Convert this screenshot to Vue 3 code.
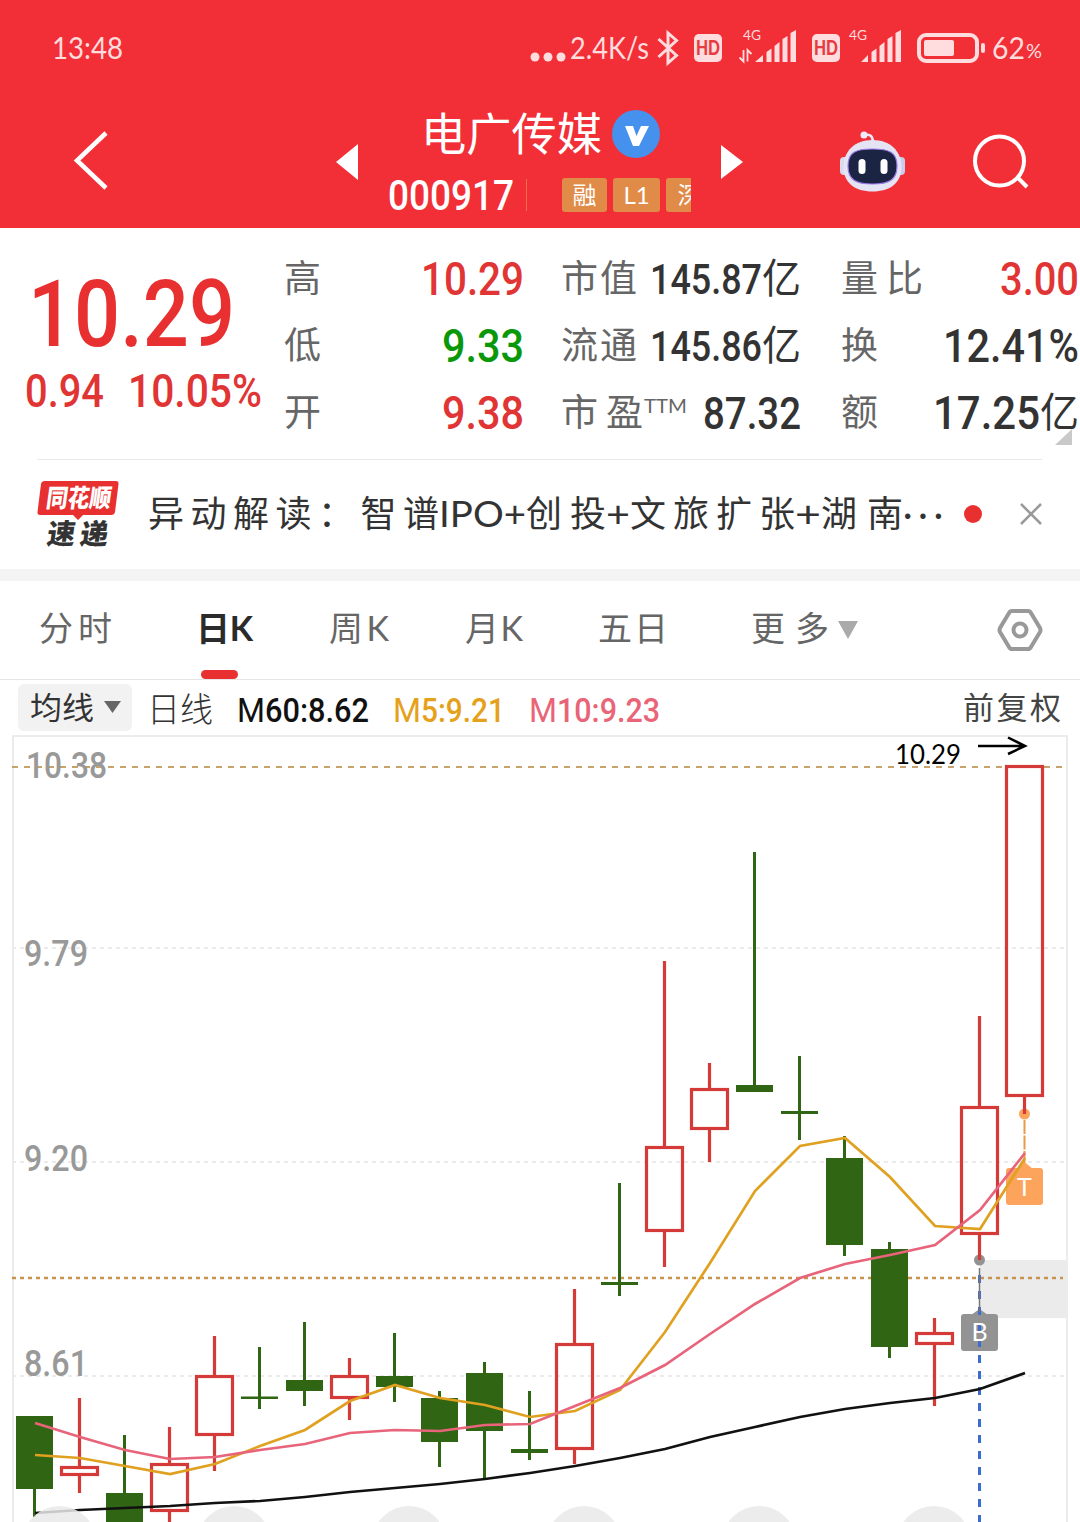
<template>
    <div class="page">
        <header class="header">
            <div class="status">
                <Fit class="clock" t="13:48" :w="71" :s="31" />
                <div class="status-right">
                    <svg class="dots" width="36" height="10" viewBox="0 0 36 10">
                        <circle cx="5" cy="5" r="4.5" />
                        <circle cx="18" cy="5" r="4.5" />
                        <circle cx="31" cy="5" r="4.5" />
                    </svg>
                    <Fit class="speed" t="2.4K/s" :w="79" :s="30" />
                    <svg class="bluetooth" width="22" height="36" viewBox="0 0 22 36">
                        <path d="M1.500 9 L19.500 25.500 L11 33 V3 L19.500 10.500 L1.500 27" />
                    </svg>
                    <span class="hd"><Fit t="HD" :w="24" :s="20" /></span>
                    <svg class="signal" width="57" height="36" viewBox="0 0 57 36">
                        <text x="4" y="12" textLength="18" lengthAdjust="spacingAndGlyphs">4G</text>
                        <path d="M4.500 22V33.500L0.500 29.500M8.500 33.500V22L12.500 26" fill="none" stroke="currentColor" stroke-width="1.800" />
                        <path d="M16 34L24 27V34zM27.500 24L32.500 20.500V34H27.500zM35.500 18L40.500 14V34H35.500zM43.500 11L48.500 8V34H43.500zM51.500 5L57 2V34H51.500z" />
                    </svg>
                    <span class="hd hd-second"><Fit t="HD" :w="24" :s="20" /></span>
                    <svg class="signal signal-second" width="52" height="36" viewBox="5 0 52 36">
                        <text x="5" y="12" textLength="18" lengthAdjust="spacingAndGlyphs">4G</text>
                        <path d="M17 34L24 27V34zM27.500 24L32.500 20.500V34H27.500zM35.500 18L40.500 14V34H35.500zM43.500 11L48.500 8V34H43.500zM51.500 5L57 2V34H51.500z" />
                    </svg>
                    <svg class="battery" width="68" height="30" viewBox="0 0 68 30">
                        <rect x="2" y="2" width="58" height="26" rx="7" fill="none" stroke="currentColor" stroke-width="4" />
                        <rect x="7" y="7" width="30" height="16" rx="2" />
                        <rect x="64" y="10" width="4" height="10" rx="2" />
                    </svg>
                    <Fit class="level" t="62" :w="33" :s="31" />
                    <Fit class="percent" t="%" :w="16" :s="19" />
                </div>
            </div>
            <div class="nav">
                <svg class="back" width="36" height="60" viewBox="0 0 36 60">
                    <path d="M33 3L4 30.500L33 58" />
                </svg>
                <svg class="prev" width="22" height="36" viewBox="0 0 22 36"><path d="M22 0V36L0 18z" /></svg>
                <div class="stock">
                    <div class="stock-name">
                        <Fit t="电广传媒" :w="181" :s="45" />
                        <svg width="48" height="48" viewBox="0 0 48 48">
                            <circle cx="24" cy="24" r="24" fill="#4690ee" />
                            <path d="M13 16H21L24.500 26L29 16H37L27 36H21z" fill="#fff" />
                        </svg>
                    </div>
                    <div class="stock-code">
                        <Fit class="code" t="000917" :w="126" :s="42" />
                        <i class="split"></i>
                        <div class="tags">
                            <span class="tag rong">融</span>
                            <span class="tag level-one">L1</span>
                            <span class="tag">深</span>
                        </div>
                    </div>
                </div>
                <svg class="next" width="22" height="34" viewBox="0 0 22 34"><path d="M0 0V34L22 17z" /></svg>
                <svg class="robot" width="66" height="62" viewBox="0 0 66 62">
                    <path d="M25 4Q33 2 33 12" fill="none" stroke="#e9e6f6" stroke-width="2.500" />
                    <circle cx="24" cy="4" r="3.500" fill="#efeafa" />
                    <rect x="0" y="26" width="10" height="18" rx="4" fill="#d9daf0" />
                    <rect x="55" y="26" width="10" height="18" rx="4" fill="#c9cdec" />
                    <path d="M32.500 9C50 9 61.500 20 61.500 36C61.500 52 50 60.500 32.500 60.500C15 60.500 3.500 52 3.500 36C3.500 20 15 9 32.500 9z" fill="#e4e4f5" />
                    <path d="M32.500 18C49 18 57 21 57 35C57 49 49 53 32.500 53C16 53 8 49 8 35C8 21 16 18 32.500 18z" fill="#1c2444" stroke="#9a7bea" stroke-width="1.200" />
                    <rect x="18.500" y="28" width="7" height="15" rx="3.500" fill="#fff" />
                    <rect x="40.500" y="28" width="7" height="15" rx="3.500" fill="#fff" />
                </svg>
                <svg class="search" width="56" height="56" viewBox="0 0 56 56">
                    <circle cx="26.500" cy="27" r="24.500" />
                    <path d="M44 43L54 53" />
                </svg>
            </div>
        </header>

        <section class="quote">
            <div class="price up">
                <Fit class="num price-now" t="10.29" :w="207" :s="92" />
                <div class="price-change">
                    <Fit class="num" t="0.94" :w="79" :s="46" />
                    <Fit class="num" t="10.05%" :w="134" :s="46" />
                </div>
            </div>
            <div v-for="(col, i) in quotes" :key="i" class="col" :class="'col-' + i">
                <div v-for="row in col" :key="row.label" class="cell">
                    <span class="label">
                        <Fit :t="row.label" :w="row.lw" :s="37" spacing />
                        <Fit v-if="row.sup" class="sup" :t="row.sup" :w="43" :s="19" />
                    </span>
                    <span class="value" :class="row.tone">
                        <Fit class="num" :t="row.value" :w="row.w" :s="row.s || 46" />
                        <Fit v-if="row.unit" class="unit" :t="row.unit" :w="39" :s="41" />
                    </span>
                </div>
            </div>
            <i class="corner"></i>
        </section>

        <section class="news">
            <svg class="logo" width="82" height="68" viewBox="0 0 82 68">
                <path d="M8 1H79Q82 1 81.500 4L78 32Q77.500 35 74 35H46L41 40L36 35H3Q0 35 0.500 32L4 4Q4.500 1 8 1z" fill="#e93030" />
                <g transform="skewX(-8)">
                    <text x="12" y="27" textLength="65" lengthAdjust="spacingAndGlyphs" font-size="25" fill="#fff">同花顺</text>
                    <text x="18" y="64" textLength="61" font-size="28" fill="#333">速递</text>
                </g>
            </svg>
            <div class="headline">
                <Fit v-for="(part, i) in headline" :key="i" :t="part.t" :w="part.w" :s="36" :spacing="part.spacing" />
            </div>
            <i class="unread"></i>
            <svg class="close" width="22" height="22" viewBox="0 0 22 22"><path d="M1 1L21 21M21 1L1 21" /></svg>
        </section>

        <nav class="tabs">
            <span
                v-for="(tab, i) in tabs"
                :key="tab.t"
                class="tab"
                :class="{ active: i === current }"
                @click="current = i"
            >
                <Fit :t="tab.t" :w="tab.w" :s="34" spacing />
            </span>
            <svg class="more" width="22" height="18" viewBox="0 0 22 18"><path d="M1 0H21L11 18z" /></svg>
            <svg class="settings" width="44" height="44" viewBox="0 0 44 44">
                <path d="M14 3H30Q32 3 33 5L42 20Q43 22 42 24L33 39Q32 41 30 41H14Q12 41 11 39L2 24Q1 22 2 20L11 5Q12 3 14 3z" />
                <circle cx="22" cy="22" r="6.500" />
            </svg>
        </nav>

        <div class="legend">
            <span class="ma-button">
                <Fit t="均线" :w="64" :s="31" />
                <svg width="17" height="12" viewBox="0 0 17 12"><path d="M0 0H17L8.500 12z" fill="#666" /></svg>
            </span>
            <Fit class="period" t="日线" :w="66" :s="34" />
            <span v-for="m in averages" :key="m.t" class="average" :class="m.name">
                <Fit class="letter" t="M" :w="28" :s="34" />
                <Fit class="num" :t="m.t" :w="m.w" :s="34" />
            </span>
            <Fit class="adjust" t="前复权" :w="98" :s="31" spacing />
        </div>

        <svg class="chart" width="1080" height="788" viewBox="0 734 1080 788">
            <rect x="980" y="1260" width="87" height="58" fill="#ebebeb" />
            <path d="M13 1522V736H1067V1522" fill="none" stroke="#ececec" stroke-width="2" />
            <path d="M12 948H1066M12 1162H1066M12 1376H1066" stroke="#ebebeb" stroke-width="2" stroke-dasharray="4 4" />
            <path d="M12 767H1062" stroke="#c8a26c" stroke-width="2" stroke-dasharray="6 6" />
            <path d="M12 1278H1063" stroke="#c6944e" stroke-width="2.500" stroke-dasharray="4 4" />

            <g class="axis">
                <text x="26" y="778" textLength="81" lengthAdjust="spacingAndGlyphs">10.38</text>
                <text x="24" y="966" textLength="64" lengthAdjust="spacingAndGlyphs">9.79</text>
                <text x="24" y="1171" textLength="64" lengthAdjust="spacingAndGlyphs">9.20</text>
                <text x="24" y="1376" textLength="64" lengthAdjust="spacingAndGlyphs">8.61</text>
            </g>

            <!-- trade marks -->
            <circle cx="979.500" cy="1260" r="5.500" fill="#939393" />
            <path d="M971 1315L979.500 1309L988 1315z" fill="#939393" />
            <rect x="961" y="1314" width="37" height="37" rx="3" fill="#939393" />
            <circle cx="1024.500" cy="1114" r="5.500" fill="#fca45c" />
            <path d="M1024.500 1120V1165" stroke="#e8994a" stroke-width="2" stroke-dasharray="14 1.500" />
            <path d="M1016 1169L1024.500 1162L1033 1169z" fill="#fca45c" />
            <rect x="1006" y="1168" width="37" height="37" rx="3" fill="#fca45c" />
            <path d="M979.500 1275V1522" stroke="#3e6bd2" stroke-width="3" stroke-dasharray="8 8" />
            <path d="M979.500 1268V1312" stroke="#777" stroke-width="1.500" />
            <text class="mark" x="979.500" y="1341">B</text>
            <text class="mark" x="1024.500" y="1196">T</text>

            <template v-for="(c, i) in candles" :key="i">
                <g v-if="c[0]" stroke="#d43a38" stroke-width="3.200">
                    <path :d="`M${cx(i)} ${c[1]}V${c[3]}M${cx(i)} ${c[4]}V${c[2]}`" />
                    <rect :x="cx(i) - 18" :y="c[3] + 1.5" width="36" :height="c[4] - c[3] - 3" fill="none" />
                </g>
                <g v-else fill="#306514">
                    <rect :x="cx(i) - 1.500" :y="c[1]" width="3" :height="c[2] - c[1]" />
                    <rect :x="cx(i) - 18.5" :y="c[3]" width="37" :height="c[4] - c[3]" />
                </g>
            </template>

            <polyline :points="line(ma60)" class="ma" stroke="#111" />
            <polyline :points="line(ma5)" class="ma" stroke="#e0a020" />
            <polyline :points="line(ma10)" class="ma" stroke="#e8647a" />

            <text class="last" x="895" y="764" textLength="66" lengthAdjust="spacingAndGlyphs">10.29</text>
            <path d="M978 746H1024M1008 737.500L1025 746L1008 754" fill="none" stroke="#000" stroke-width="2.500" />

            <circle v-for="x in [59.5, 234, 409, 584, 759, 934]" :key="x" :cx="x" cy="1543" r="37" fill="#e9e9e9" fill-opacity="0.850" />
        </svg>
    </div>
</template>

<script setup>
import { h, ref } from 'vue'

// One line of text squeezed or spaced to an exact width, centred on its box
const Fit = ({ t, w, s, spacing }) =>
    h('svg', { width: w, height: s, style: { flex: 'none', display: 'block', overflow: 'visible' } }, [
        h('text', {
            x: 0,
            y: s * (/[\u4e00-\u9fff]/.test(t) ? 0.86 : 0.856),
            'font-size': s,
            fill: 'currentColor',
            textLength: w,
            lengthAdjust: spacing ? 'spacing' : 'spacingAndGlyphs'
        }, t)
    ])
Fit.props = { t: String, w: Number, s: Number, spacing: Boolean }

const current = ref(1)

const quotes = [
    [
        { label: '高', lw: 37, value: '10.29', w: 103, tone: 'up' },
        { label: '低', lw: 37, value: '9.33', w: 82, tone: 'down' },
        { label: '开', lw: 37, value: '9.38', w: 82, tone: 'up' }
    ],
    [
        { label: '市值', lw: 76, value: '145.87', w: 112, s: 42, unit: '亿' },
        { label: '流通', lw: 76, value: '145.86', w: 112, s: 42, unit: '亿' },
        { label: '市盈', lw: 82, sup: 'TTM', value: '87.32', w: 98, s: 44 }
    ],
    [
        { label: '量比', lw: 82, value: '3.00', w: 79, tone: 'up' },
        { label: '换', lw: 37, value: '12.41%', w: 136 },
        { label: '额', lw: 37, value: '17.25', w: 107, unit: '亿' }
    ]
]

const headline = [
    { t: '异动解读：智谱', w: 291, spacing: true },
    { t: 'IPO+', w: 87 },
    { t: '创投', w: 80, spacing: true },
    { t: '+', w: 24 },
    { t: '文旅扩张', w: 165, spacing: true },
    { t: '+', w: 26 },
    { t: '湖南', w: 82, spacing: true },
    { t: '···', w: 40, spacing: true }
]

const tabs = [
    { t: '分时', w: 73 },
    { t: '日K', w: 57 },
    { t: '周K', w: 60 },
    { t: '月K', w: 58 },
    { t: '五日', w: 70 },
    { t: '更多', w: 78 }
]

const averages = [
    { name: 'm60', t: '60:8.62', w: 104 },
    { name: 'm5', t: '5:9.21', w: 84 },
    { name: 'm10', t: '10:9.23', w: 103 }
]

// [rising, high, low, body top, body bottom]
const candles = [
    [0, 1416, 1517, 1416, 1489],
    [1, 1398, 1493, 1466, 1476],
    [0, 1435, 1530, 1493, 1530],
    [1, 1427, 1530, 1463, 1512],
    [1, 1336, 1471, 1375, 1436],
    [0, 1347, 1409, 1396.5, 1399],
    [0, 1322, 1406, 1380, 1391],
    [1, 1358, 1420, 1375, 1399],
    [0, 1333, 1402, 1376, 1387],
    [0, 1391, 1467, 1398, 1442],
    [0, 1362, 1479, 1373, 1431],
    [0, 1391, 1460, 1449, 1453],
    [1, 1289, 1464, 1343, 1450],
    [0, 1183, 1296, 1282, 1285],
    [1, 961, 1267, 1146, 1232],
    [1, 1063, 1162, 1088, 1130],
    [0, 852, 1092, 1085, 1092],
    [0, 1056, 1140, 1111, 1114],
    [0, 1136, 1256, 1158, 1245],
    [0, 1242, 1358, 1249, 1347],
    [1, 1318, 1406, 1332, 1345],
    [1, 1016, 1260, 1106, 1235],
    [1, 765, 1114, 765, 1097]
]

const ma5 = [1455, 1458, 1466, 1474, 1464, 1446, 1430, 1401, 1385, 1398, 1405, 1417, 1411, 1390, 1332, 1263, 1191, 1146, 1138, 1177, 1226, 1229, 1158]
const ma10 = [1423, 1437, 1450, 1459, 1457, 1450, 1444, 1433, 1430, 1431, 1425, 1424, 1406, 1388, 1365, 1334, 1304, 1278, 1264, 1255, 1245, 1210, 1153]
const ma60 = [1513, 1510, 1508, 1506, 1503, 1501, 1497, 1492, 1488, 1484, 1479, 1473, 1466, 1458, 1449, 1437, 1427, 1417, 1409, 1403, 1398, 1389, 1373]

const cx = (i) => 34.5 + i * 45
const line = (values) => values.map((y, i) => `${cx(i) + 0.5},${y}`).join(' ')
</script>

<style scoped>
.page {
    width: 1080px;
    height: 1522px;
    overflow: hidden;
    background: #fff;
    color: #333;
    font-family: Lato, "Noto Sans CJK SC", sans-serif;
}

.page svg {
    flex: none;
    display: block;
    overflow: visible;
}

.page .chart {
    overflow: hidden;
}

.num {
    font-family: Roboto, "Noto Sans CJK SC", sans-serif;
    font-weight: 500;
}

.header {
    height: 228px;
    background: #f22f37;
    color: #fff;
}

.status {
    height: 96px;
    box-sizing: border-box;
    padding: 0 38px 0 52px;
    display: flex;
    align-items: center;
    justify-content: space-between;
    color: #ffdcdd;
    fill: currentColor;
}

.clock {
    margin-bottom: 1px;
}

.status-right {
    display: flex;
    align-items: center;
}

.dots {
    margin: 18px 4px 0 0;
}

.bluetooth {
    margin: 0 15px 0 8px;
    fill: none;
    stroke: currentColor;
    stroke-width: 3;
}

.hd {
    width: 28px;
    height: 28px;
    border-radius: 5px;
    background: #ffdcdd;
    color: #e63b41;
    font-weight: 900;
    display: flex;
    align-items: center;
    justify-content: center;
}

.signal {
    margin: -4px 16px 0 17px;
    font-size: 14px;
}

.signal-second {
    margin-left: 9px;
}

.level {
    margin: -2px 1px 0 7px;
}

.percent {
    margin-top: 7px;
}

.nav {
    height: 132px;
    display: flex;
    align-items: center;
}

.back {
    margin: -4px 0 0 73px;
    fill: none;
    stroke: #fff;
    stroke-width: 4.500;
}

.prev {
    margin-left: 227px;
    fill: #fff;
}

.stock {
    width: 303px;
    margin-left: 30px;
    padding-top: 2px;
}

.stock-name {
    display: flex;
    align-items: center;
    gap: 10px;
    padding-left: 33px;
}

.stock-code {
    display: flex;
    align-items: center;
    margin-top: 16px;
    height: 42px;
}

.code {
    font-family: Roboto, sans-serif;
    font-weight: 500;
}

.split {
    width: 1px;
    height: 32px;
    margin: 0 35px 0 12px;
    background: #f46a4a;
}

.tags {
    display: flex;
    gap: 6px;
    width: 129px;
    overflow: hidden;
}

.tag {
    flex: none;
    width: 47px;
    height: 34px;
    border-radius: 3px;
    background: #e08c48;
    font-size: 24px;
    line-height: 34px;
    text-align: center;
}

.rong {
    width: 45px;
}

.next {
    margin-left: 30px;
    fill: #fff;
}

.robot {
    margin-left: 97px;
}

.search {
    margin-left: 67px;
    fill: none;
    stroke: #fff;
    stroke-width: 4;
}

.quote {
    position: relative;
    height: 231px;
    display: flex;
}

.quote::after {
    content: "";
    position: absolute;
    left: 37px;
    right: 38px;
    bottom: -1px;
    height: 1px;
    background: #e9e9e9;
}

.up {
    color: #e03534;
}

.down {
    color: #0a980a;
}

.price {
    width: 284px;
    padding-top: 39px;
    box-sizing: border-box;
}

.price-now {
    margin-left: 28px;
    color: #e93030;
}

.price-change {
    display: flex;
    gap: 24px;
    padding: 9px 0 0 25px;
}

.col {
    display: grid;
    grid-template-rows: repeat(3, 67px);
    padding-top: 17px;
}

.col-0 {
    width: 240px;
}

.col-1 {
    width: 240px;
    margin-left: 37px;
}

.col-2 {
    width: 238px;
    margin-left: 40px;
}

.cell,
.label,
.value {
    display: flex;
    align-items: center;
}

.cell {
    justify-content: space-between;
}

.label {
    color: #666;
}

.sup {
    margin: -12px 0 0 1px;
}

.corner {
    position: absolute;
    right: 8px;
    bottom: 14px;
    width: 17px;
    height: 16px;
    background: #c9c9c9;
    clip-path: polygon(100% 0, 100% 100%, 0 100%);
}

.news {
    height: 110px;
    box-sizing: border-box;
    padding-left: 37px;
    display: flex;
    align-items: center;
}

.logo {
    font-weight: 900;
}

.headline {
    display: flex;
    margin-left: 29px;
    width: 796px;
}

.unread {
    width: 18px;
    height: 18px;
    margin-left: 20px;
    border-radius: 50%;
    background: #e93030;
}

.close {
    margin-left: 38px;
    stroke: #999;
    stroke-width: 2.500;
}

.tabs {
    height: 111px;
    box-sizing: border-box;
    border-top: 12px solid #f4f4f4;
    border-bottom: 1px solid #e6e6e6;
    display: flex;
    align-items: center;
    color: #666;
}

.tab {
    position: relative;
    height: 98px;
    box-sizing: border-box;
    padding-bottom: 2px;
    margin-left: 77px;
    display: flex;
    align-items: center;
}

.tab:first-child {
    margin-left: 39px;
}

.tab:nth-child(2) {
    margin-left: 84px;
}

.tab:nth-child(3),
.tab:nth-child(4) {
    margin-left: 76px;
}

.tab:nth-child(5) {
    margin-left: 75px;
}

.tab:nth-child(6) {
    margin-left: 83px;
}

.active {
    color: #2b2b2b;
    font-weight: bold;
}

.active::after {
    content: "";
    position: absolute;
    left: 5px;
    bottom: 0;
    width: 37px;
    height: 9px;
    border-radius: 5px;
    background: #e93030;
}

.more {
    margin-left: 8px;
    fill: #aaa;
}

.settings {
    margin-left: 139px;
    fill: none;
    stroke: #999;
    stroke-width: 4;
}

.legend {
    height: 54px;
    padding: 0 19px 0 18px;
    display: flex;
    align-items: center;
}

.ma-button {
    width: 114px;
    height: 47px;
    box-sizing: border-box;
    padding-left: 12px;
    border-radius: 6px;
    background: #f2f2f2;
    display: flex;
    align-items: center;
    gap: 10px;
}

.period {
    margin: 5px 0 0 15px;
    font-weight: 300;
}

.average {
    display: flex;
    margin: 5px 0 0 24px;
}

.m60 {
    color: #111;
}

.m5 {
    color: #e5a11b;
}

.m10 {
    color: #ea6478;
}

.letter {
    font-family: Roboto, sans-serif;
}

.adjust {
    margin-left: auto;
    color: #444;
}

.axis {
    font: 500 36px Roboto, sans-serif;
    fill: #999;
}

.ma {
    fill: none;
    stroke-width: 2.700;
}

.mark {
    font-size: 25px;
    fill: #fff;
    text-anchor: middle;
}

.last {
    font-size: 27px;
    fill: #000;
}
</style>

<style>
body {
    margin: 0;
}
</style>
